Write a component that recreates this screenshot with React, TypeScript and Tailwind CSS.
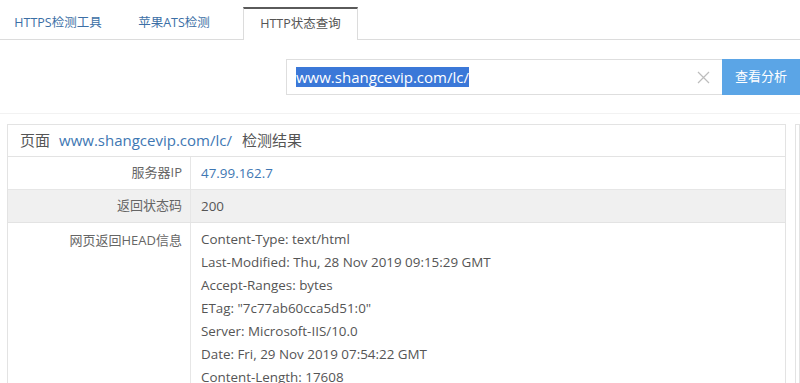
import React from "react";

const font = { fontFamily: '"Open Sans", "Noto Sans CJK SC", sans-serif' };

export default function App() {
  const headLines = [
    "Content-Type: text/html",
    "Last-Modified: Thu, 28 Nov 2019 09:15:29 GMT",
    "Accept-Ranges: bytes",
    'ETag: "7c77ab60cca5d51:0"',
    "Server: Microsoft-IIS/10.0",
    "Date: Fri, 29 Nov 2019 07:54:22 GMT",
    "Content-Length: 17608",
  ];
  return (
    <div className="w-[800px] h-[383px] overflow-hidden bg-white text-[13px] text-[#555]" style={font}>
      {/* tabs */}
      <div className="flex h-[40px] items-end border-b border-[#dcdcdc]">
        <div className="w-[116px] h-[33px] flex items-center justify-center text-[12.5px] text-[#3c6fa6] -mb-px">HTTPS检测工具</div>
        <div className="w-[116px] h-[33px] flex items-center justify-center text-[12.5px] text-[#3c6fa6] -mb-px">苹果ATS检测</div>
        <div className="ml-[11px] w-[115px] h-[33px] flex items-center justify-center text-[12.5px] bg-white border-t-2 border-t-[#5a5a5a] border-x border-x-[#dcdcdc] -mb-px text-[#555]">HTTP状态查询</div>
      </div>
      {/* search */}
      <div className="flex justify-end mt-[19px] h-[36px]">
        <div className="w-[436px] border border-[#dedede] border-r-0 flex items-center pl-[9px] pr-[12px]">
          <span className="flex-1 text-[15px] leading-[20px]">
            <span className="bg-[#3b78d8] text-white">www.shangcevip.com/lc/</span>
          </span>
          <svg width="13" height="13" viewBox="0 0 13 13" className="mr-[0px]">
            <path d="M1 1 L12 12 M12 1 L1 12" stroke="#bdbdbd" strokeWidth="1.2" fill="none" />
          </svg>
        </div>
        <div className="w-[78px] bg-[#5ba5e6] text-white flex items-center justify-center text-[13px]">查看分析</div>
      </div>
      {/* content area */}
      <div className="mt-[18px] border-t border-[#f2f2f2] flex gap-[9px] pt-[10px] pl-[7px]">
        <div className="w-[779px] border border-[#e3e3e3] shrink-0">
          <div className="h-[32px] flex items-center pl-[12px] text-[15px] text-[#555] border-b border-[#e3e3e3]">
            页面<span className="text-[#3e77b3] ml-[9px] mr-[10px]">www.shangcevip.com/lc/</span>检测结果
          </div>
          <div className="flex h-[33px] border-b border-[#e6e6e6]">
            <div className="w-[183px] flex items-center justify-end pr-[8px] text-[#666] border-r border-[#e6e6e6]">服务器IP</div>
            <div className="flex-1 flex items-center pl-[10px] text-[13.4px] text-[#3e77b3]">47.99.162.7</div>
          </div>
          <div className="flex h-[33px] bg-[#f0f0f0] border-b border-[#e3e3e3]">
            <div className="w-[183px] flex items-center justify-end pr-[8px] text-[#666] border-r border-[#e6e6e6]">返回状态码</div>
            <div className="flex-1 flex items-center pl-[10px] text-[13.4px]">200</div>
          </div>
          <div className="flex">
            <div className="w-[183px] pt-[6px] text-right pr-[8px] text-[#666] border-r border-[#e6e6e6] leading-[23px]">网页返回HEAD信息</div>
            <div className="flex-1 pl-[10px] pt-[5px] leading-[23px] text-[13.4px] text-[#555]">
              {headLines.map((l) => (
                <div key={l}>{l}</div>
              ))}
            </div>
          </div>
        </div>
        <div className="flex-1 border border-[#e3e3e3] h-[400px]"></div>
      </div>
    </div>
  );
}
